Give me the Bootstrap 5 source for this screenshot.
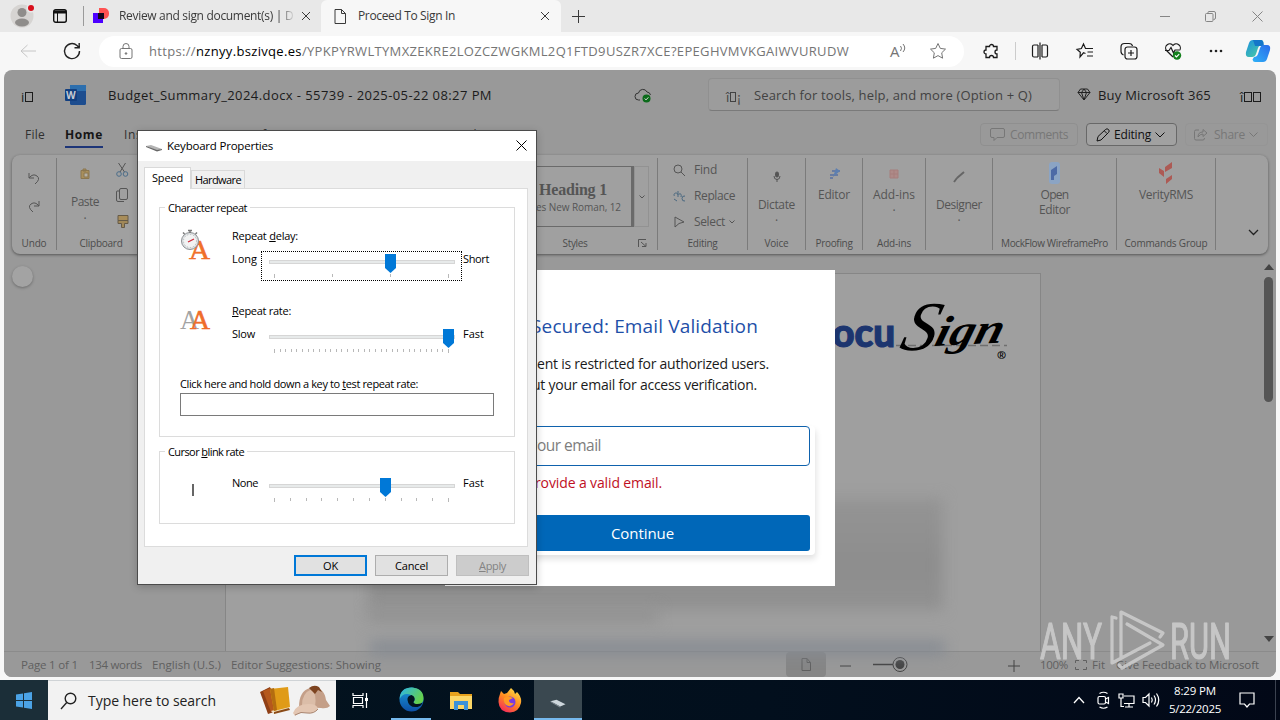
<!DOCTYPE html>
<html lang="en">
  <head>
    <meta charset="UTF-8" />
    <meta name="viewport" content="width=device-width, initial-scale=1.0" />
    <title>Proceed To Sign In</title>
    <link
      href="https://cdn.jsdelivr.net/npm/bootstrap@5.3.3/dist/css/bootstrap.min.css"
      rel="stylesheet"
    />
    <style>
      body {
        width: 1280px;
        height: 720px;
        overflow: hidden;
        font-family: "Open Sans", "Noto Sans", sans-serif;
        font-size: 12px;
        line-height: 16px;
        color: #1b1b1b;
        background: #f7f7f7;
      }
      svg {
        display: block;
        flex: none;
        overflow: visible;
      }
      svg:not([fill]) {
        fill: none;
      }
      svg:not([stroke]) {
        stroke: currentColor;
      }
      svg text {
        stroke: none;
      }
      svg .heavy {
        stroke: currentColor;
        stroke-width: 1.2px;
      }
      [data-w] {
        display: inline-block;
        flex: none;
        white-space: pre;
      }
      u {
        text-underline-offset: 1px;
      }

      /* browser chrome */
      .tabstrip {
        height: 32px;
        background: #e8e8e8;
        color: #3a3a3a;
      }
      .tab-item {
        height: 32px;
      }
      .tab-item.current {
        width: 240px;
        background: #f7f7f7;
        border-radius: 6px 6px 0 0;
      }
      .tab-fade {
        width: 176px;
        overflow: hidden;
        -webkit-mask-image: linear-gradient(90deg, #000 160px, transparent 176px);
        mask-image: linear-gradient(90deg, #000 160px, transparent 176px);
      }
      .toolbar-row {
        height: 38px;
      }
      .omnibox {
        width: 865px;
        height: 31px;
        background: #fff;
        color: #757575;
        font-size: 13px;
      }

      /* web page */
      .page-view {
        width: 1272px;
        height: 607px;
        margin: 0 4px;
        background: #999;
        border-radius: 8px;
        overflow: hidden;
      }
      .doc-head {
        height: 49px;
        padding-left: 17px;
        font-size: 13px;
      }
      .tofu {
        display: inline-block;
        width: 6px;
        height: 10px;
        border: 1px solid currentColor;
        margin-right: 1px;
      }
      .tool-search {
        width: 352px;
        height: 33px;
        border: 1px solid #909090;
        border-bottom-color: #7a7a7a;
        border-radius: 4px;
        color: #424242;
        background: #9c9c9c;
      }
      .menu-row {
        height: 35px;
        padding: 0 0 4px 21px;
        font-size: 12px;
        color: #303030;
      }
      .menu-row .active-menu {
        font-weight: 700;
        color: #161616;
        border-bottom: 2px solid #1d3578;
        padding-bottom: 3px;
        margin-top: 5px;
      }
      .head-btn {
        height: 23px;
        border: 1px solid #8f8f8f;
        border-radius: 4px;
        color: #777;
      }
      .head-btn.edit-mode {
        color: #101010;
        border-color: #686868;
        background: #a1a1a1;
      }
      .ribbon {
        height: 99px;
        margin: 0 8px;
        background: #a0a0a0;
        border-radius: 8px;
        box-shadow: 0 1px 3px rgba(0, 0, 0, 0.45);
        color: #555;
      }
      .rgroup {
        position: relative;
        flex: none;
        height: 92px;
        margin-top: 3px;
        border-right: 1px solid #7b7b7b;
      }
      .rgroup .rlabel {
        position: absolute;
        left: 0;
        right: 0;
        bottom: -1px;
        text-align: center;
        font-size: 10px;
        color: #4c4c4c;
      }
      .style-box {
        width: 137px;
        height: 61px;
        border: 1px solid #6a6a6a;
        border-right-width: 3px;
      }
      .sheet {
        width: 816px;
        height: 378px;
        margin: 4px 0 0 221px;
        background: #9f9f9f;
        border: 1px solid #868686;
        border-bottom: 0;
      }
      .hazy {
        filter: blur(7px);
      }
      .round-btn {
        position: absolute;
        left: 12px;
        top: 267px;
        width: 21px;
        height: 21px;
        border-radius: 50%;
        background: #a3a3a3;
        box-shadow: 0 1px 3px rgba(0, 0, 0, 0.3);
      }
      .sb-thumb {
        width: 9px;
        height: 125px;
        background: #555;
        border-radius: 5px;
      }
      .doc-status {
        height: 26px;
        border-top: 1px solid #8b8b8b;
        background: #999;
        color: #606060;
        font-size: 11.5px;
        padding-left: 17px;
      }
      .view-btn {
        width: 40px;
        height: 25px;
        background: #868686;
        border-radius: 4px;
      }

      /* email prompt */
      .prompt {
        position: absolute;
        left: 445px;
        top: 270px;
        width: 390px;
        height: 316px;
        background: #fff;
      }
      .prompt h1 {
        font-size: 19px;
        line-height: 24px;
        font-weight: 500;
        color: #1e4fa8;
        margin: 44px 77px 0 0;
      }
      .prompt-form {
        width: 366px;
        height: 129px;
        margin: 31px 0 0 4px;
        border-radius: 4px;
        box-shadow: 1px 4px 6px rgba(0, 0, 0, 0.12);
      }
      .mail-field {
        height: 40px;
        margin: 0 5px 0 20px;
        padding: 0 208px 2px 0;
        border: 1px solid #0f62ad;
        border-radius: 4px;
        color: #7d7d7d;
        font-size: 15.5px;
      }
      .go-btn {
        height: 36px;
        margin: 24px 5px 0 20px;
        border-radius: 3px;
        background: #0067b8;
        color: #fff;
        font-size: 15px;
      }

      /* keyboard dialog */
      .kb-window {
        position: absolute;
        left: 137px;
        top: 130px;
        width: 400px;
        height: 455px;
        border: 1px solid #4b4b4b;
        background: #f0f0f0;
        color: #000;
        font-size: 11px;
        box-shadow: 0 2px 8px rgba(0, 0, 0, 0.2);
      }
      .kb-title {
        height: 30px;
        background: #fff;
        padding: 0 9px 0 8px;
        font-size: 11.5px;
      }
      .kb-tab {
        border: 1px solid #d9d9d9;
        border-bottom: 0;
        background: #f0f0f0;
        height: 18px;
        padding-top: 1px;
      }
      .kb-tab.on {
        background: #fff;
        height: 22px;
        padding-top: 2px;
        margin-bottom: -1px;
        position: relative;
        z-index: 1;
      }
      .kb-pane {
        width: 384px;
        height: 359px;
        margin-left: 6px;
        padding: 18px 12px 0 14px;
        background: #fff;
        border: 1px solid #dcdcdc;
      }
      .kb-group {
        border: 1px solid #dcdcdc;
      }
      .kb-legend {
        width: max-content;
        margin: -8px 0 0 5px;
        padding: 0 3px;
        background: #fff;
      }
      .kb-ico {
        width: 72px;
        padding-left: 20px;
      }
      .kb-low {
        width: 29px;
      }
      .trackbar {
        width: 201px;
        height: 30px;
      }
      .trackbar.focused {
        outline: 1px dotted #000;
        outline-offset: -1px;
      }
      .kb-input {
        width: 314px;
        height: 23px;
        margin-left: 20px;
        border: 1px solid #7a7a7a;
        background: #fff;
      }
      .kb-btn {
        width: 73px;
        height: 21px;
        background: #e1e1e1;
        border: 1px solid #adadad;
      }
      .kb-btn.main {
        border: 2px solid #0078d7;
      }
      .kb-btn.off {
        background: #ccc;
        border-color: #bfbfbf;
        color: #838383;
      }

      /* taskbar */
      .task-row {
        height: 40px;
        margin-top: 3px;
        background: linear-gradient(90deg, #03141f, #020f1d 60%, #020817);
        color: #fff;
      }
      .start-btn {
        width: 48px;
        background: #1b2e38;
      }
      .task-search {
        width: 288px;
        background: #f2f2f2;
        border-top: 1px solid #cfd3d6;
        color: #222;
        font-size: 14px;
      }
      .task-app {
        width: 49px;
        height: 40px;
      }
      .task-app.open {
        border-bottom: 2px solid #76b9ed;
      }
      .task-app.front {
        background: #3a4850;
      }
      .watermark {
        position: absolute;
        left: 1036px;
        top: 606px;
        color: #cfcfcf;
      }
    </style>
  </head>
  <body>
    <!-- Tabs -->
    <div class="tabstrip d-flex align-items-center">
      <svg width="34" height="32" viewBox="0 0 34 32" style="margin-left: 6px" stroke="none">
        <circle cx="16" cy="16" r="11.5" fill="#d6d4d2" />
        <circle cx="16" cy="12.5" r="4.5" fill="#8f8d8b" />
        <ellipse cx="16" cy="22.5" rx="7" ry="4" fill="#8f8d8b" />
        <circle cx="25" cy="8" r="4.5" fill="#e8e8e8" />
        <circle cx="25" cy="8" r="3" fill="#d80f1c" />
      </svg>
      <svg width="14" height="14" viewBox="0 0 14 14" style="margin: 0 16px 0 13px" stroke="#111">
        <rect x=".7" y=".7" width="12.6" height="12.6" rx="2" stroke-width="1.4" />
        <path d="M1 3h12" stroke-width="3" />
        <path d="M4.500 4v9" />
      </svg>
      <div class="tab-item d-flex align-items-center">
        <svg width="2" height="20" stroke="#9a9a9a"><path d="M.5 0v20" /></svg>
        <svg width="16" height="16" viewBox="0 0 16 16" class="ms-2" stroke="none">
          <path d="M6 0h5a5 5 0 0 1 5 5v1a5 5 0 0 1-5 5H6z" fill="#ff5252" />
          <path d="M0 5h10v10H0z" fill="#4c00ff" />
          <path d="M5 5h6v6H5z" fill="#140a1e" />
        </svg>
        <div class="tab-fade" style="margin-left: 10px">
          <span data-w="163">Review and sign document(s) |</span> D
        </div>
        <svg width="10" height="10" viewBox="0 0 10 10" style="margin-left: 6px"><path d="M1 1l8 8M9 1L1 9" /></svg>
      </div>
      <div class="tab-item current d-flex align-items-center" style="margin-left: 10px">
        <svg width="12" height="15" viewBox="0 0 12 15" style="margin-left: 13px"><path d="M1 .5h6.500L11.500 4.500V14.500H1zM7.500 .500v4h4" /></svg>
        <span data-w="97" style="margin-left: 12px">Proceed To Sign In</span>
        <svg width="10" height="10" viewBox="0 0 10 10" style="margin-left: 85px"><path d="M1 1l8 8M9 1L1 9" /></svg>
      </div>
      <svg width="15" height="15" viewBox="0 0 15 15" style="margin-left: 10px"><path d="M7.500 1v13M1 7.500h13" /></svg>
      <svg width="10" height="10" viewBox="0 0 10 10" class="ms-auto" stroke="#858585"><path d="M0 5.500h10" /></svg>
      <svg width="11" height="11" viewBox="0 0 11 11" style="margin: 0 36px 0 35px" stroke="#858585"><rect x=".5" y="2.500" width="7.500" height="8" rx="1" /><path d="M3 2.500V1.500q0-1 1-1h5q1.500 0 1.500 1.500v5q0 1.500-2 1.500" /></svg>
      <svg width="11" height="11" viewBox="0 0 11 11" style="margin-right: 17px" stroke="#858585"><path d="M.500 .500l10 10M10.500 .500l-10 10" /></svg>
    </div>

    <!-- Address bar -->
    <div class="toolbar-row d-flex align-items-center">
      <svg width="16" height="14" viewBox="0 0 16 14" style="margin-left: 20px" stroke="#c6c6c6"><path d="M16 7H1M7.500 1l-6.500 6 6.500 6" /></svg>
      <svg width="18" height="18" viewBox="0 0 18 18" style="margin-left: 27px" stroke="#222" stroke-width="1.400"><path d="M16.500 9a7.500 7.500 0 1 1-2.500-5.500L16 5.500M16.200 1v4.700h-4.700" /></svg>
      <div class="omnibox rounded-pill d-flex align-items-center" style="margin-left: 18px">
        <svg width="14" height="17" viewBox="0 0 14 17" style="margin-left: 20px"><rect x="1" y="5.500" width="12" height="10" rx="1.500" /><path d="M4 5.500V3.500a3 3 0 0 1 6 0v2" /><circle cx="7" cy="10.500" r=".8" fill="currentColor" /></svg>
        <span data-w="700" style="margin-left: 16px">https://<span class="text-black">nznyy.bszivqe.es</span>/YPKPYRWLTYMXZEKRE2LOZCZWGKML2Q1FTD9USZR7XCE?EPEGHVMVKGAIWVURUDW</span>
        <svg width="17" height="17" viewBox="0 0 17 17" style="margin-left: 41px"><text x="0" y="14" font-size="15" fill="#757575">A</text><path d="M10.500 3q2 2 0 5M13 1q3.500 4 0 8" /></svg>
        <svg width="18" height="18" viewBox="0 0 18 18" class="ms-auto" style="margin-right: 17px"><path d="M9 1.500l2.300 4.900 5.200.7-3.800 3.700.9 5.400L9 13.600l-4.600 2.600.9-5.400L1.500 7.100l5.200-.7z" /></svg>
      </div>
      <svg width="18" height="18" viewBox="0 0 18 18" style="margin-left: 19px" stroke-width="1.300"><path d="M3 4.500h3.500a2 2 0 1 1 4 0H14V8a2 2 0 0 0 0 4v3.500h-3.500a2 2 0 0 0-4 0H3V12a2 2 0 1 1 0-4z" /></svg>
      <svg width="1" height="18" style="margin-left: 14px" stroke="#ccc"><path d="M.5 0v18" /></svg>
      <svg width="18" height="18" viewBox="0 0 18 18" style="margin-left: 15px" stroke-width="1.200"><path d="M7 3H3Q1.500 3 1.500 4.500v9Q1.500 15 3 15h4M11 3h4q1.500 0 1.500 1.500v9Q16.500 15 15 15h-4M7 3v12M11 3v12M9 .5v17" /></svg>
      <svg width="18" height="18" viewBox="0 0 18 18" style="margin-left: 27px" stroke-width="1.200"><path d="M9.500 11.500L7.500 10.800 4 15l.3-4.800L1 7.300l4.400-.8L7.500 2l2 4.500H17M11.500 10H17M11 14h6" /></svg>
      <svg width="18" height="18" viewBox="0 0 18 18" style="margin-left: 26px" stroke-width="1.200"><path d="M3.500 13Q1 12 1 9.500V5q0-3.500 3.500-3.500H9Q12 1.500 12.500 4" /><rect x="5" y="5" width="12" height="12" rx="2.500" /><path d="M11 8v6M8 11h6" /></svg>
      <svg width="18" height="18" viewBox="0 0 18 18" style="margin-left: 26px" stroke-width="1.200"><path d="M9 15L2.500 8.500a4 4 0 0 1 6.500-5 4 4 0 0 1 6.500 5M1 8.500h4l2-3 2.500 5.500 1.500-3h4" /><circle cx="13" cy="13.500" r="4.200" fill="#13801c" stroke="none" /><path d="M11 13.500l1.500 1.500 2.700-2.800" stroke="#fff" /></svg>
      <svg width="16" height="4" viewBox="0 0 16 4" style="margin-left: 26px" fill="#222" stroke="none"><circle cx="3" cy="2" r="1.300" /><circle cx="8" cy="2" r="1.300" /><circle cx="13" cy="2" r="1.300" /></svg>
      <svg width="24" height="22" viewBox="0 0 24 22" style="margin-left: 22px" stroke="none">
        <defs>
          <linearGradient id="cpA" x1="0" y1="0" x2="1" y2="1"><stop offset="0" stop-color="#1c8fe0" /><stop offset="1" stop-color="#4fd39a" /></linearGradient>
          <linearGradient id="cpB" x1="1" y1="0" x2="0" y2="1"><stop offset="0" stop-color="#2a6bea" /><stop offset="1" stop-color="#2fb2f7" /></linearGradient>
        </defs>
        <path d="M7 0h8q2 0 2.500 3L16 5q-3 0-4 3l-2 6q-1 3-4 3H3q-4 0-3-5L3 3q1-3 4-3z" fill="url(#cpA)" />
        <path d="M7 0h8q2 0 2.500 3L18 6H9z" fill="#1476c9" />
        <path d="M17 22H9q-2 0-2.500-2.500L8 17q3 0 4-3l2-6q1-3 4-3h3q4 0 3 5l-3 9q-1 3-4 3z" fill="url(#cpB)" />
      </svg>
    </div>

    <!-- Page -->
    <div class="page-view position-relative">
      <div class="doc-head d-flex align-items-center">
        <span class="d-flex align-items-center mt-1" style="width: 44px">i<i class="tofu" style="width: 8px; margin-left: 1px"></i></span>
        <svg width="21" height="20" viewBox="0 0 21 20" stroke="none">
          <rect x="5" y="0" width="16" height="20" rx="1.500" fill="#1d4d8f" />
          <rect x="5" y="0" width="16" height="6" fill="#2d6fae" />
          <rect x="0" y="4" width="12" height="12" rx="1" fill="#123f80" />
          <text x="1" y="13.500" font-size="10" font-weight="700" fill="#c6cbd4">W</text>
        </svg>
        <span data-w="384" style="margin-left: 22px">Budget_Summary_2024.docx - 55739 - 2025-05-22 08:27 PM</span>
        <svg width="18" height="16" viewBox="0 0 18 16" style="margin-left: 142px" stroke="#333"><path d="M6 13H4.500a3.500 3.500 0 0 1 0-7A4.500 4.500 0 0 1 13 5q3 .3 3.500 3" /><circle cx="12.500" cy="11.500" r="4" fill="#0c6b1b" stroke="none" /><path d="M10.700 11.500l1.300 1.400 2.400-2.600" stroke="#ddd" /></svg>
        <div class="tool-search d-flex align-items-center" style="margin-left: 56px">
          <span style="margin-left: 17px; width: 28px" class="d-flex align-items-center mt-1">î<i class="tofu" style="margin-left: 1px"></i>¡</span>
          <span data-w="278">Search for tools, help, and more (Option + Q)</span>
        </div>
        <svg width="14" height="13" viewBox="0 0 14 13" style="margin-left: 17px" stroke="#222"><path d="M3.500 1h7L13 4.500 7 12 1 4.500zM1 4.500h12M4.500 4.500L7 12l2.500-7.500L7 1 4.500 4.500" /></svg>
        <span data-w="113" style="margin-left: 7px">Buy Microsoft 365</span>
        <span class="d-flex align-items-center mt-1" style="margin-left: 29px">î<i class="tofu" style="width: 8px; margin-left: 1px"></i><i class="tofu" style="width: 8px"></i></span>
      </div>

      <div class="menu-row d-flex align-items-center">
        <span data-w="20">File</span>
        <span class="active-menu" style="margin-left: 20px"><span data-w="38">Home</span></span>
        <span data-w="36" style="margin-left: 21px">Insert</span>
        <span data-w="40" style="margin-left: 24px">Layout</span>
        <span data-w="62" style="margin-left: 24px">References</span>
        <span data-w="42" style="margin-left: 28px">Review</span>
        <span data-w="28" style="margin-left: 24px">View</span>
        <span data-w="28" style="margin-left: 25px">Help</span>
        <div class="head-btn d-flex align-items-center ms-auto" style="width: 98px">
          <svg width="15" height="13" viewBox="0 0 15 13" style="margin: 0 5px 0 9px"><path d="M2 .5h11q1.500 0 1.500 1.500v6q0 1.500-1.500 1.500H7L4 12.500v-3H2Q.5 9.500 .5 8V2Q.5 .5 2 .5z" /></svg>
          <span data-w="58">Comments</span>
        </div>
        <div class="head-btn edit-mode d-flex align-items-center ms-2" style="width: 91px">
          <svg width="14" height="14" viewBox="0 0 14 14" style="margin: 0 4px 0 9px"><path d="M1 13l1-4.500 7.500-7a2 2 0 0 1 3 3L5 12zM8.500 3l2.500 2.500" /></svg>
          <span data-w="37">Editing</span>
          <svg width="10" height="6" viewBox="0 0 10 6" class="ms-1"><path d="M.5 .5L5 5 9.500 .5" /></svg>
        </div>
        <div class="head-btn d-flex align-items-center ms-2" style="width: 83px; margin-right: 8px; border-color: #959595">
          <svg width="14" height="13" viewBox="0 0 14 13" style="margin: 0 6px 0 8px"><path d="M5 2H2Q.5 2 .5 3.500v7Q.5 12 2 12h7q1.500 0 1.500-2M4 9q0-5 5-5V1.500L13 5 9 8.500V6Q6 6 4 9z" /></svg>
          <span data-w="31">Share</span>
          <svg width="9" height="6" viewBox="0 0 9 6" class="ms-1"><path d="M.5 .5l4 4 4-4" /></svg>
        </div>
      </div>

      <div class="ribbon d-flex" style="margin-top: 1px">
        <div class="rgroup d-flex flex-column align-items-center" style="width: 45px">
          <svg width="12" height="13" viewBox="0 0 12 13" style="margin-top: 14px"><path d="M1 1v5h5M1 6q4-5 8-2t-2 8" /></svg>
          <svg width="12" height="13" viewBox="0 0 12 13" style="margin-top: 15px"><path d="M11 1v5H6M11 6Q7 1 3 4t2 8" /></svg>
          <div class="rlabel"><span data-w="25">Undo</span></div>
        </div>
        <div class="rgroup d-flex" style="width: 89px">
          <div class="d-flex flex-column align-items-center" style="width: 56px">
            <svg width="10" height="10" viewBox="0 0 10 10" style="margin-top: 11px" stroke="#8a7650"><path d="M1 1.500h8v8H1zM3 0h3v2H3z" fill="#a98f5c" /><path d="M4 4h4v4H4z" fill="#b5b0a6" /></svg>
            <span data-w="28" style="margin-top: 15px">Paste</span>
            <span style="line-height: 8px; margin-top: 5px">·</span>
          </div>
          <div>
            <svg width="13" height="14" viewBox="0 0 13 14" style="margin: 5px 0 0 3px"><path d="M2.500 0l6 9M9.500 0L4 9" /><circle cx="3" cy="11" r="2.300" stroke="#4b6d8a" /><circle cx="9.500" cy="11" r="2.300" stroke="#4b6d8a" /></svg>
            <svg width="12" height="15" viewBox="0 0 12 15" style="margin: 11px 0 0 3px"><rect x="3.500" y=".5" width="8" height="11" rx="1.500" /><path d="M3 3H1Q.5 3 .5 4v8q0 1.500 1.500 1.500h6" /></svg>
            <svg width="12" height="14" viewBox="0 0 12 14" style="margin: 12px 0 0 4px" stroke="#665b48"><path d="M1 .5h10v5H1z" fill="#a88d5a" /><path d="M1 5.500h10v3H7.500v4h-3v-4H1z" fill="#a18858" /></svg>
          </div>
          <div class="rlabel"><span data-w="43">Clipboard</span></div>
        </div>
        <div class="rgroup" style="width: 339px"></div>
        <div class="rgroup d-flex" style="width: 173px">
          <div class="style-box d-flex flex-column align-items-center" style="margin: 8px 0 0 12px">
            <b data-w="68" style="font-family: 'Liberation Serif', serif; font-size: 16px; margin: 15px 0 0 17px">Heading 1</b>
            <span data-w="102" style="font-size: 10px; margin: 1px 0 0 11px">Times New Roman, 12</span>
          </div>
          <div class="d-flex align-items-center justify-content-center" style="width: 15px; height: 61px; margin-top: 8px; border: 1px solid #929292"><svg width="6" height="4" viewBox="0 0 6 4"><path d="M.5 .5L3 3 5.500 .5" /></svg></div>
          <div class="rlabel ps-2"><span data-w="25">Styles</span></div>
          <svg width="9" height="8" viewBox="0 0 9 8" style="position: absolute; right: 10px; bottom: 3px"><path d="M.5 8V.5H8M3 3l5 4.500M8 4v3.500H4" /></svg>
        </div>
        <div class="rgroup" style="width: 90px; padding: 4px 0 0 15px">
          <div class="d-flex align-items-center" style="height: 16px"><svg width="12" height="12" viewBox="0 0 12 12"><circle cx="5" cy="5" r="4" /><path d="M8 8l4 4" /></svg><span data-w="23" style="margin-left: 9px">Find</span></div>
          <div class="d-flex align-items-center" style="height: 16px; margin-top: 10px"><svg width="13" height="12" viewBox="0 0 13 12" stroke="#4a6880"><path d="M5 1v6M1.500 6a2 1.800 0 1 1 3.500-1M6 4q3-1 2 3M12 6q-3-.5-3 2.500t3 2.500M1 9l3 2" /></svg><span data-w="41" style="margin-left: 8px">Replace</span></div>
          <div class="d-flex align-items-center" style="height: 16px; margin-top: 10px"><svg width="12" height="12" viewBox="0 0 12 12"><path d="M2 1l9 5-5 1.500L2 11z" /></svg><span data-w="31" style="margin-left: 9px">Select</span><svg width="6" height="4" viewBox="0 0 6 4" class="ms-1"><path d="M.5 .5L3 3 5.500 .5" /></svg></div>
          <div class="rlabel"><span data-w="30">Editing</span></div>
        </div>
        <div class="rgroup d-flex flex-column align-items-center" style="width: 58px">
          <svg width="8" height="12" viewBox="0 0 8 12" style="margin-top: 13px"><rect x="2.500" y="1" width="3" height="5" rx="1.500" fill="#555" /><path d="M1 5q0 3.500 3 3.500T7 5M4 8v3" /></svg>
          <span data-w="37" style="margin-top: 14px">Dictate</span>
          <span style="line-height: 8px; margin-top: 4px">·</span>
          <div class="rlabel"><span data-w="24">Voice</span></div>
        </div>
        <div class="rgroup d-flex flex-column align-items-center" style="width: 57px">
          <svg width="13" height="13" viewBox="0 0 13 13" style="margin-top: 9px" stroke="#5870a0"><path d="M4 4h8M2 8h8M2 11h3" stroke-width="1.500" /><path d="M8 1l4 3-7 6" fill="#5d7fb0" stroke="none" /></svg>
          <span data-w="32" style="margin-top: 7px">Editor</span>
          <div class="rlabel"><span data-w="37">Proofing</span></div>
        </div>
        <div class="rgroup d-flex flex-column align-items-center" style="width: 63px">
          <svg width="10" height="10" viewBox="0 0 10 10" style="margin-top: 11px" stroke="#a67f7c"><path d="M1 1h8v8H1zM5 1v8M1 5h8" fill="#ae8a88" /></svg>
          <span data-w="42" style="margin-top: 8px">Add-ins</span>
          <span style="line-height: 8px; margin-top: 4px">·</span>
          <div class="rlabel"><span data-w="34">Add-ins</span></div>
        </div>
        <div class="rgroup d-flex flex-column align-items-center" style="width: 67px">
          <svg width="12" height="12" viewBox="0 0 12 12" style="margin-top: 13px" stroke="#666"><path d="M1 11l3-4M4 7l7-6" stroke-width="2" /></svg>
          <span data-w="46" style="margin-top: 14px">Designer</span>
          <span style="line-height: 8px; margin-top: 4px">·</span>
        </div>
        <div class="rgroup d-flex flex-column align-items-center" style="width: 124px">
          <svg width="11" height="22" viewBox="0 0 11 22" style="margin-top: 4px" stroke="none"><rect width="11" height="22" rx="3" fill="#8ba4c4" /><path d="M2 8l6-4v8l-3 2v4H2z" fill="#4d6aa6" /></svg>
          <span data-w="28" style="margin-top: 3px">Open</span>
          <span data-w="31" style="margin-top: -1px">Editor</span>
          <div class="rlabel"><span data-w="107">MockFlow WireframePro</span></div>
        </div>
        <div class="rgroup d-flex flex-column align-items-center" style="width: 99px">
          <svg width="14" height="22" viewBox="0 0 14 22" style="margin-top: 4px" stroke="none" fill="#ad5a54"><path d="M13 0v6L6 10V5zM0 6l5 3v6l-5-4zM13 13v4l-6 5v-5z" /></svg>
          <span data-w="54" style="margin-top: 3px">VerityRMS</span>
          <div class="rlabel"><span data-w="83">Commands Group</span></div>
        </div>
        <svg width="11" height="7" viewBox="0 0 11 7" style="margin: 74px 0 0 32px" stroke="#222" stroke-width="1.300"><path d="M1 1l4.500 4.500L10 1" /></svg>
      </div>

      <!-- Document -->
      <div class="d-flex" style="height: 397px; padding-top: 15px">
        <div class="sheet flex-shrink-0">
          <svg width="200" height="70" viewBox="0 0 200 70" style="margin: 26px 0 0 586px; color: #1c356f">
            <path d="M84 45.500H195" stroke="#6f6f6f" stroke-width="1.500" stroke-dasharray="8 4" />
            <text class="heavy" x="-9" y="47" font-family="Lato" font-weight="900" font-size="39" textLength="92" lengthAdjust="spacingAndGlyphs" fill="#1c356f">Docu</text>
            <g font-family="Liberation Serif" font-style="italic" fill="#000">
              <text x="0" y="0" font-size="70" transform="translate(86 50) skewX(-16)">S</text>
              <text x="0" y="0" font-size="42" font-weight="700" transform="translate(121 46) rotate(-3) skewX(-18)" textLength="68" lengthAdjust="spacingAndGlyphs">ign</text>
            </g>
            <text x="185" y="59" font-size="11" font-weight="700" fill="#000">®</text>
          </svg>
          <div class="hazy" style="height: 112px; width: 575px; margin: 128px 0 0 142px; background: linear-gradient(#949494, #8d8d8d 60%, #919191)"></div>
          <div class="hazy" style="height: 14px; width: 290px; margin: -2px 0 0 142px; background: #929292"></div>
          <div class="hazy" style="height: 14px; width: 575px; margin: 19px 0 0 144px; background: #868b92"></div>
        </div>
        <div class="ms-auto d-flex flex-column align-items-center" style="width: 15px; margin-top: -6px">
          <svg width="10" height="6" viewBox="0 0 10 6" style="margin: 1px 0 7px" fill="#444" stroke="none"><path d="M5 0l5 6H0z" /></svg>
          <div class="sb-thumb"></div>
          <svg width="10" height="6" viewBox="0 0 10 6" class="mt-auto" style="margin-bottom: 9px" fill="#444" stroke="none"><path d="M0 0h10L5 6z" /></svg>
        </div>
      </div>
      <div class="round-btn" style="left: 8px; top: 196px"></div>

      <div class="doc-status d-flex align-items-center">
        <span data-w="57">Page 1 of 1</span>
        <span data-w="53" style="margin-left: 11px">134 words</span>
        <span data-w="69" style="margin-left: 10px">English (U.S.)</span>
        <span data-w="150" style="margin-left: 10px">Editor Suggestions: Showing</span>
        <div class="view-btn d-flex align-items-center justify-content-center" style="margin-left: 405px"><svg width="10" height="13" viewBox="0 0 10 13"><path d="M1 .5h5l3.500 4v8H1zM6 .5v4h3.500" /></svg></div>
        <svg width="11" height="2" style="margin: 2px 0 0 14px" stroke="#444"><path d="M0 1h11" /></svg>
        <svg width="36" height="17" viewBox="0 0 36 17" style="margin-left: 22px" stroke="#444"><path d="M0 8.500h20" stroke-width="1.500" /><circle cx="27" cy="8.500" r="7" /><circle cx="27" cy="8.500" r="4.500" fill="#444" stroke="none" /></svg>
        <svg width="12" height="12" viewBox="0 0 12 12" style="margin: 2px 0 0 99px" stroke="#444"><path d="M6 0v12M0 6h12" /></svg>
        <span data-w="28" style="margin-left: 20px">100%</span>
        <svg width="12" height="10" viewBox="0 0 12 10" style="margin: 0 5px 0 7px"><path d="M.5 3V.5H4M8 .5h3.500V3M.5 7v2.500H4M8 9.500h3.500V7" /></svg>
        <span data-w="13">Fit</span>
        <span data-w="143" style="margin-left: 11px">Give Feedback to Microsoft</span>
      </div>
    </div>

    <!-- Taskbar -->
    <div class="task-row d-flex">
      <div class="start-btn d-flex align-items-center justify-content-center">
        <svg width="16" height="17" viewBox="0 0 16 17" stroke="none" fill="#4ba3e6"><path d="M0 2.500L7 1.500V8H0zM8 1.300L16 0v8H8zM0 9h7v6.500L0 14.500zM8 9h8v8l-8-1.200z" /></svg>
      </div>
      <div class="task-search d-flex align-items-center">
        <svg width="17" height="18" viewBox="0 0 17 18" style="margin-left: 12px" stroke-width="1.400"><circle cx="10.500" cy="6.500" r="5.300" /><path d="M6.700 10.500L1 17" /></svg>
        <span data-w="128" style="margin-left: 11px">Type here to search</span>
        <svg width="72" height="36" viewBox="0 0 72 36" class="ms-auto" style="margin-right: 4px" stroke="none">
          <path d="M0 9l10-5 7 24-9 3z" fill="#8f3f16" />
          <path d="M3 8l8-3 4 22-4 2z" fill="#b5581c" />
          <path d="M11 28l18-5 0 3-15 5z" fill="#f2e2c4" />
          <path d="M10 6l18-2 2 20-16 4z" fill="#e09b17" />
          <path d="M10 6l4-1 3 22-3 1z" fill="#b36d10" />
          <path d="M14 31l16-4-1-2-15 4z" fill="#8a4a16" />
          <path d="M39 24Q39 8 50 5q14-2 16 12l4 6q-3 3-9 2z" fill="#c49f88" />
          <path d="M42 22Q42 10 52 6q5 6 3 17z" fill="#dbbda8" />
          <path d="M49 5q5-4 10-1l3 5-4-2-3 4-3-3z" fill="#7d4421" />
          <path d="M33 30q3-9 16-9 8 0 9 5-4 5-11 4-8-1-12 3z" fill="#e3c6b2" />
          <path d="M35 32q6-4 12-2 7 1 11-4" stroke="#a98570" fill="none" />
        </svg>
      </div>
      <div class="task-app d-flex align-items-center justify-content-center">
        <svg width="17" height="17" viewBox="0 0 17 17" stroke-width="1.200"><path d="M1 1v2.500h10V1M1 16v-2.500h10V16M1.500 5.500h9v6h-9zM14.500 1v15" /><path d="M13 6h3v3h-3z" fill="#fff" stroke="none" /></svg>
      </div>
      <div class="task-app open d-flex align-items-center justify-content-center" style="width: 40px; margin: 0 5px 0 6px">
        <svg width="25" height="25" viewBox="0 0 25 25" stroke="none">
          <defs>
            <linearGradient id="edA" x1="0" y1="0" x2="1" y2=".5"><stop offset="0" stop-color="#2bb5f0" /><stop offset="1" stop-color="#66d04b" /></linearGradient>
            <linearGradient id="edB" x1="0" y1="0" x2="0" y2="1"><stop offset="0" stop-color="#1a9ad8" /><stop offset="1" stop-color="#0d4fa6" /></linearGradient>
          </defs>
          <circle cx="12.500" cy="12.500" r="12" fill="url(#edB)" />
          <path d="M.6 12Q1 .5 13 .5q11.500 1 11.500 11 0 5.500-6 5.500-4.500 0-4-2 1.500-1.500 1-3.500-2-4-7-4.500T.6 12z" fill="url(#edA)" />
          <path d="M8.500 13q-.5-4 4-5 3 1 3.200 4 0 1.500-1.200 3 0 2 4 2 3 0 5-1.500-1 3.500-5 4.500-9 1-10-7z" fill="#03141f" />
        </svg>
      </div>
      <div class="task-app d-flex align-items-center justify-content-center">
        <svg width="22" height="19" viewBox="0 0 22 19" stroke="none"><path d="M0 1h8l2 2h12v14H0z" fill="#e6a11d" /><path d="M0 5h22v13H0z" fill="#fbd667" /><path d="M4 10h14v9h-4v-5H8v5H4z" fill="#3c92d9" /></svg>
      </div>
      <div class="task-app d-flex align-items-center justify-content-center">
        <svg width="24" height="25" viewBox="0 0 24 25" stroke="none">
          <defs><linearGradient id="ffA" x1=".8" y1="0" x2=".2" y2="1"><stop offset="0" stop-color="#ffe14a" /><stop offset=".5" stop-color="#ff8a1f" /><stop offset="1" stop-color="#f5245f" /></linearGradient></defs>
          <path d="M2 6l1-3 3 3 3-1L13 0q3 2 4 6l2-2q5 5 4 11-2 9-11 9.500Q1 24 .5 14 .5 9 2 6z" fill="url(#ffA)" />
          <circle cx="12" cy="14" r="5.500" fill="#7a3ae0" />
          <path d="M6 10q4-3 9 0l-4 2q0 4 5 3-3 5-8 2-3-3-2-7z" fill="#ff9a24" />
        </svg>
      </div>
      <div class="task-app open front d-flex align-items-center justify-content-center" style="width: 48px">
        <svg width="18" height="9" viewBox="0 0 22 12" class="mt-2" stroke="none"><path d="M1 3l8-2 12 6-7 3z" fill="#cdd6dc" /><path d="M1 3l13 7v1.500L1 4z" fill="#7e8a92" /></svg>
      </div>
      <div class="ms-auto d-flex align-items-center">
        <svg width="12" height="8" viewBox="0 0 12 8" stroke-width="1.300"><path d="M1 7l5-5.500L11 7" /></svg>
        <svg width="13" height="18" viewBox="0 0 13 18" style="margin-left: 12px" stroke-width="1.200"><rect x="1" y="5.500" width="7.500" height="7.500" rx="1.500" /><path d="M8.500 8l3-1.500v6l-3-1.500M2.500 2.500q4-2.500 8 0M2.500 16q4 2.500 8 0" /></svg>
        <svg width="17" height="15" viewBox="0 0 17 15" style="margin-left: 8px" stroke-width="1.200"><path d="M6 3h10v7.500H6M11 10.500V14M7 14h8M1 1h4v4H1zM3 5v8.500h3" /></svg>
        <svg width="18" height="16" viewBox="0 0 18 16" style="margin-left: 7px" stroke-width="1.200"><path d="M1 5.500h2.500L7 2v12l-3.500-3.500H1zM9.500 5.500q1.500 2.500 0 5M12 3.500q3 4.500 0 9M14.500 1.500q4.500 6.500 0 13" /></svg>
        <div class="d-flex flex-column align-items-center" style="width: 54px; margin-left: 8px; font-size: 11.500px">
          <span data-w="42" style="margin-bottom: 2px">8:29 PM</span>
          <span data-w="52">5/22/2025</span>
        </div>
        <svg width="16" height="16" viewBox="0 0 16 16" style="margin: 0 20px 0 17px" stroke-width="1.200"><path d="M1 1h14v11H10.500L8 15l-2.500-3H1z" /></svg>
        <svg width="1" height="40" style="margin-right: 4px" stroke="#3b4250"><path d="M.5 0v40" /></svg>
      </div>
    </div>

    <!-- Email prompt -->
    <div class="prompt">
      <h1 class="text-end"><span data-w="227">Secured: Email Validation</span></h1>
      <div class="d-flex justify-content-end" style="font-size: 14px; line-height: 21px; margin: 15px 66px 0 0">
        This docum<span data-w="232">ent is restricted for authorized users.</span>
      </div>
      <div class="d-flex justify-content-end" style="font-size: 14px; line-height: 21px; margin-right: 78px">
        Please inp<span data-w="225">ut your email for access verification.</span>
      </div>
      <div class="prompt-form">
        <div class="mail-field d-flex align-items-center justify-content-end">
          Enter y<span data-w="64">our email</span>
        </div>
        <div class="d-flex justify-content-end" style="font-size: 14px; color: #c00f1f; margin: 9px 153px 0 0">Please p<span data-w="127">rovide a valid email.</span></div>
        <div class="go-btn d-flex align-items-center"><span data-w="63" style="margin-left: 142px">Continue</span></div>
      </div>
    </div>

    <!-- Keyboard Properties -->
    <div class="kb-window">
      <div class="kb-title d-flex align-items-center">
        <svg width="16" height="8" viewBox="0 0 16 8" class="mt-1" stroke="none"><path d="M0 2l5-1 11 4-5 2z" fill="#b4b4b4" /><path d="M0 2l11 4 5-1v1l-5 1.500L0 3z" fill="#666" /></svg>
        <span data-w="106" style="margin-left: 5px">Keyboard Properties</span>
        <svg width="11" height="11" viewBox="0 0 11 11" class="ms-auto" style="margin-top: -2px"><path d="M.5 .5l10 10M10.500 .5l-10 10" /></svg>
      </div>
      <div class="d-flex align-items-end" style="height: 27px; padding-left: 6px">
        <div class="kb-tab on" style="width: 47px; padding-left: 7px"><span data-w="31">Speed</span></div>
        <div class="kb-tab" style="width: 54px; padding-left: 3px"><span data-w="46">Hardware</span></div>
      </div>
      <div class="kb-pane">
        <div class="kb-group" style="height: 230px">
          <div class="kb-legend"><span data-w="79">Character repeat</span></div>
          <div class="d-flex" style="margin-top: 12px">
            <div class="kb-ico">
              <svg width="30" height="32" viewBox="0 0 30 32" style="margin-top: 1px" stroke="#777">
                <text x="9" y="30" font-family="Liberation Serif" font-size="28" textLength="21" lengthAdjust="spacingAndGlyphs" fill="#f0702a" class="heavy" style="stroke: #f0702a; stroke-width: 0.6px">A</text>
                <circle cx="10" cy="12" r="8.500" fill="#dfe2e4" stroke="#8b8f92" />
                <circle cx="10" cy="12" r="6.500" fill="#f2f3f3" stroke="#b5b8ba" stroke-dasharray="1 2" />
                <path d="M8 1.500h4M10 2v2M3 3.500l1.500 1.500M17 3.500L15.500 5" stroke-width="1.500" />
                <path d="M8 13l6-3" stroke="#d02a3c" stroke-width="1.300" />
              </svg>
            </div>
            <div>
              <div><span data-w="66">Repeat <u>d</u>elay:</span></div>
              <div class="d-flex" style="margin-top: 7px">
                <div class="kb-low"><span data-w="25">Long</span></div>
                <div class="trackbar focused" data-ticks="4" data-pos="2"></div>
                <span data-w="26" style="padding-left: 1px">Short</span>
              </div>
            </div>
          </div>
          <div class="d-flex" style="margin-top: 22px">
            <div class="kb-ico">
              <svg width="32" height="24" viewBox="0 0 32 24" style="margin-top: 4px" font-family="Liberation Serif" font-size="27">
                <text x="0" y="22" fill="#a3a3a3" textLength="19" lengthAdjust="spacingAndGlyphs">A</text>
                <text x="10" y="22" fill="#ef6d2b" class="heavy" style="stroke: #ef6d2b; stroke-width: 0.6px" textLength="20" lengthAdjust="spacingAndGlyphs">A</text>
              </svg>
            </div>
            <div>
              <div><span data-w="59"><u>R</u>epeat rate:</span></div>
              <div class="d-flex" style="margin-top: 7px">
                <div class="kb-low"><span data-w="23">Slow</span></div>
                <div class="trackbar" data-ticks="32" data-pos="31"></div>
                <span data-w="21" style="padding-left: 1px">Fast</span>
              </div>
            </div>
          </div>
          <div style="margin: 20px 0 1px 20px"><span data-w="238">Click here and hold down a key to <u>t</u>est repeat rate:</span></div>
          <div class="kb-input"></div>
        </div>
        <div class="kb-group" style="height: 73px; margin-top: 14px">
          <div class="kb-legend"><span data-w="76">Cursor <u>b</u>link rate</span></div>
          <div class="d-flex" style="margin-top: 15px">
            <div class="kb-ico"><svg width="14" height="22"><path d="M13 9v12" stroke="#333" stroke-width="1.500" /></svg></div>
            <div class="kb-low"><span data-w="26">None</span></div>
            <div class="trackbar" data-ticks="12" data-pos="7"></div>
            <span data-w="21" style="padding-left: 1px">Fast</span>
          </div>
        </div>
      </div>
      <div class="d-flex justify-content-end gap-2" style="margin: 8px 7px 0 0">
        <div class="kb-btn main d-flex align-items-center justify-content-center"><span data-w="15">OK</span></div>
        <div class="kb-btn d-flex align-items-center justify-content-center"><span data-w="33">Cancel</span></div>
        <div class="kb-btn off d-flex align-items-center justify-content-center"><span data-w="27"><u>A</u>pply</span></div>
      </div>
    </div>

    <!-- Watermark -->
    <svg class="watermark" width="200" height="66" viewBox="0 0 200 66" opacity=".85" stroke="#cfcfcf" stroke-width="3.200" stroke-linejoin="round" stroke-linecap="round">
      <g fill="#cfcfcf" font-family="Roboto" font-size="50">
        <text class="heavy" x="4" y="53" textLength="62" lengthAdjust="spacingAndGlyphs">ANY</text>
        <text class="heavy" x="134" y="53" textLength="61" lengthAdjust="spacingAndGlyphs">RUN</text>
      </g>
      <path fill="none" d="M80 12l-4-1V57L114 37M85 51V6L127 27l-3 4M91 18l36 21L86 62l-3-3" />
    </svg>

    <script src="https://cdn.jsdelivr.net/npm/bootstrap@5.3.3/dist/js/bootstrap.bundle.min.js"></script>
    <script>
      // Spread each label over its own width
      document.querySelectorAll("[data-w]").forEach((el) => {
        const pad = parseFloat(getComputedStyle(el).paddingLeft);
        const extra = Number(el.dataset.w) - (el.getBoundingClientRect().width - pad);
        el.style.letterSpacing = extra / el.textContent.length + "px";
      });

      // Trackbars
      document.querySelectorAll(".trackbar").forEach((bar) => {
        const count = Number(bar.dataset.ticks);
        const step = 174 / (count - 1);
        const x = Math.round(13 + step * Number(bar.dataset.pos));
        let ticks = "";
        for (let i = 0; i < count; i++) {
          ticks += `M${Math.round(13 + i * step) + 0.5} 23v${i === 0 || i === count - 1 ? 4 : 3}`;
        }
        bar.innerHTML = `<svg width="201" height="30">
          <rect x="8.500" y="9.500" width="185" height="3" fill="#e7eaea" stroke="#d6d6d6" />
          <path d="${ticks}" stroke="#b8b8b8" />
          <path d="M${x - 5} 3h11v14l-5.500 5-5.500-5z" fill="#0078d7" stroke="none" />
        </svg>`;
      });
    </script>
  </body>
</html>
